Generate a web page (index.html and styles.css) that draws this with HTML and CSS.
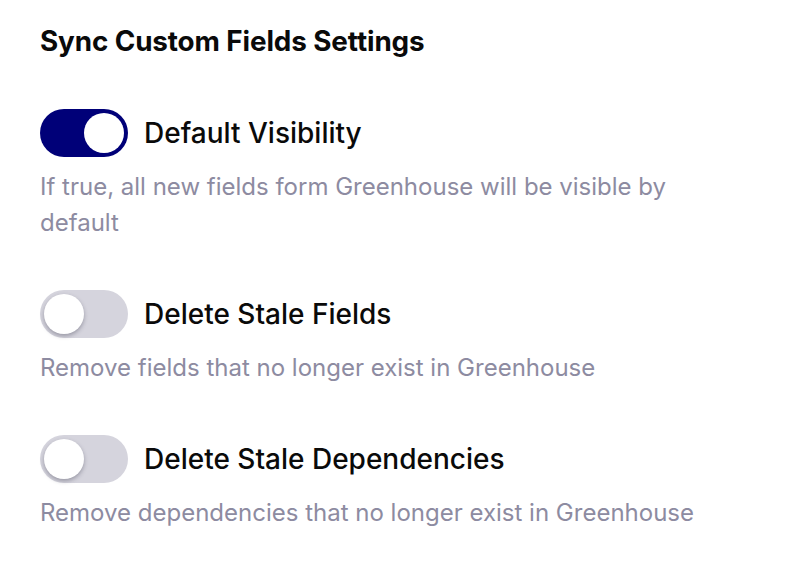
FILE: index.html
```html
<!DOCTYPE html>
<html>
<head>
<meta charset="utf-8">
<link rel="stylesheet" href="styles.css">
</head>
<body>
<div class="panel">
  <h2 class="title">Sync Custom Fields Settings</h2>
  <div class="settings">
    <div class="setting">
      <div class="row">
        <span class="toggle on"><span class="knob"></span></span>
        <span class="label">Default Visibility</span>
      </div>
      <p class="desc">If true, all new fields form Greenhouse will be visible by default</p>
    </div>
    <div class="setting">
      <div class="row">
        <span class="toggle"><span class="knob"></span></span>
        <span class="label">Delete Stale Fields</span>
      </div>
      <p class="desc">Remove fields that no longer exist in Greenhouse</p>
    </div>
    <div class="setting">
      <div class="row">
        <span class="toggle"><span class="knob"></span></span>
        <span class="label">Delete Stale Dependencies</span>
      </div>
      <p class="desc">Remove dependencies that no longer exist in Greenhouse</p>
    </div>
  </div>
</div>
</body>
</html>
```
FILE: styles.css
```css
html, body {
  margin: 0;
  padding: 0;
  background: #ffffff;
}
body {
  font-family: "Inter", "Liberation Sans", sans-serif;
  color: #0a0a0a;
}
.panel {
  padding: 24px 40px 0 40px;
  width: 680px;
}
.title {
  margin: 0;
  font-size: 27.8px;
  line-height: 34px;
  font-weight: 700;
  letter-spacing: -0.1px;
}
.settings {
  margin-top: 51px;
  display: flex;
  flex-direction: column;
  gap: 49px;
}
.row {
  display: flex;
  align-items: center;
  gap: 16px;
  height: 48px;
}
.toggle {
  box-sizing: border-box;
  width: 88px;
  height: 48px;
  border-radius: 24px;
  background: #d5d4dd;
  padding: 4px;
  display: flex;
  align-items: center;
  flex: none;
}
.toggle .knob {
  width: 40px;
  height: 40px;
  border-radius: 50%;
  background: #ffffff;
  box-shadow: 0 2px 4px rgba(40, 40, 60, 0.35);
}
.toggle.on {
  background: #000078;
  justify-content: flex-end;
}
.toggle.on .knob {
  box-shadow: none;
}
.label {
  font-size: 28px;
  font-weight: 500;
  letter-spacing: 0;
}
.desc {
  margin: 12px 0 0 0;
  font-size: 24px;
  line-height: 36px;
  color: #8d8ba1;
  max-width: 670px;
}
```
